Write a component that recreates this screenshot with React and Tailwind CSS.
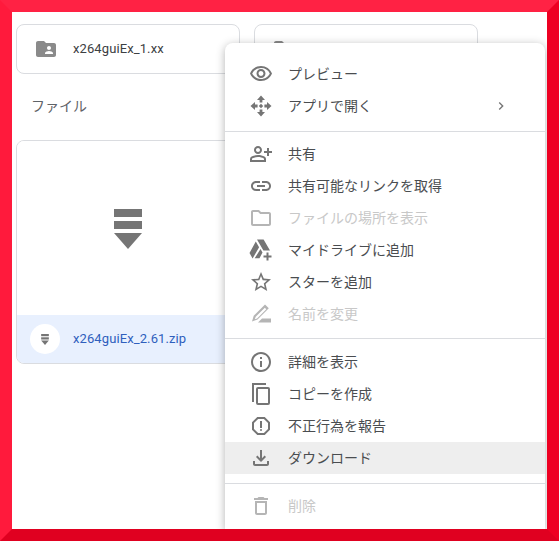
import React from 'react';
import {
    MdOutlineVisibility, MdOutlinePersonAddAlt, MdLink, MdOutlineFolder, MdStarBorder,
    MdOutlineInfo, MdOutlineReportGmailerrorred, MdOutlineFileDownload, MdOutlineDelete,
    MdFolderShared, MdChevronRight,
} from 'react-icons/md';

const OpenWithIcon = ({ className }) => (
    <svg viewBox="0 0 24 24" className={className} fill="currentColor">
        <path d="M12 1.500l4 4.500h-2.600v2.600h-2.800V6H8zM12 22.500l-4-4.500h2.600v-2.600h2.800V18H16zM1.500 12l4.500-4v2.600h2.600v2.800H6V16zM22.500 12l-4.500 4v-2.600h-2.600v-2.800H18V8z" />
        <path d="M12 9.800l2.200 2.200-2.200 2.200L9.800 12z" />
    </svg>
);

const DriveAddIcon = ({ className }) => (
    <svg viewBox="0 0 24 24" className={className} fill="currentColor">
        <path d="M8 1.500h6.600l6.400 11h-6.600zM6.800 3.500l3.300 5.700L3.600 20.500.5 15zM11.500 11l2 3.500-3 5.800H5.700z" />
        <path d="M17.500 14.500h2v3h3v2h-3v3h-2v-3h-3v-2h3z" />
    </svg>
);

const CopyIcon = ({ className }) => (
    <svg viewBox="0 0 24 24" className={className} fill="currentColor">
        <path d="M3 1h14v2H5v17H3z" />
        <path d="M9 5h10a2 2 0 012 2v14a2 2 0 01-2 2H9a2 2 0 01-2-2V7a2 2 0 012-2zm0 2v14h10V7z" fillRule="evenodd" />
    </svg>
);

const RenameIcon = ({ className }) => (
    <svg viewBox="0 0 24 24" className={className} fill="currentColor">
        <path d="M16 2.500l3.800 3.800L8.500 17.600 3 19.500l1.700-5.700zm-.2 3.200L6.700 14.800l-.9 2.500 2.300-.9 9.200-9.100z" fillRule="evenodd" />
        <path d="M13 16.500h9v4H9z" />
    </svg>
);

const ZipIcon = ({ className }) => (
    <svg viewBox="0 0 28 40" className={className} fill="currentColor">
        <rect x="0" y="0" width="28" height="8" />
        <rect x="0" y="12" width="28" height="8" />
        <path d="M0 24h28L14 40z" />
    </svg>
);

const sections = [
    [
        { label: 'プレビュー', icon: MdOutlineVisibility },
        { label: 'アプリで開く', icon: OpenWithIcon, arrow: true },
    ],
    [
        { label: '共有', icon: MdOutlinePersonAddAlt },
        { label: '共有可能なリンクを取得', icon: MdLink },
        { label: 'ファイルの場所を表示', icon: MdOutlineFolder, disabled: true },
        { label: 'マイドライブに追加', icon: DriveAddIcon },
        { label: 'スターを追加', icon: MdStarBorder },
        { label: '名前を変更', icon: RenameIcon, disabled: true },
    ],
    [
        { label: '詳細を表示', icon: MdOutlineInfo },
        { label: 'コピーを作成', icon: CopyIcon },
        { label: '不正行為を報告', icon: MdOutlineReportGmailerrorred },
        { label: 'ダウンロード', icon: MdOutlineFileDownload, active: true },
    ],
    [
        { label: '削除', icon: MdOutlineDelete, disabled: true },
    ],
];

const MenuRow = ({ item }) => {
    const Icon = item.icon;
    return (
        <div className={`flex h-8 items-center pl-6 pr-9 ${item.active ? 'bg-[#eeeeee]' : ''}`}>
            <Icon className={`h-6 w-6 shrink-0 ${item.disabled ? 'text-[#b5b5b5]' : 'text-[#757575]'}`} />
            <span className={`ml-[15px] flex-1 text-sm ${item.disabled ? 'text-[#c8c8c8]' : 'text-[#4a4d50]'}`}>{item.label}</span>
            {item.arrow && <MdChevronRight className="h-4 w-4 text-[#757575]" />}
        </div>
    );
};

const FolderCard = ({ name }) => (
    <div className="flex h-[50px] w-[224px] items-center rounded-lg border border-[#dadce0] bg-white pl-[17px]">
        <MdFolderShared className="h-6 w-6 text-[#8a8a8a]" />
        <span className="ml-[15px] text-[13px] tracking-[0.1px] text-[#3c4043]">{name}</span>
    </div>
);

export default function App() {
    return (
        <div className="relative box-border h-[541px] w-[559px] overflow-hidden border-[12px] border-t-[#ff2244] border-r-[#ee0022] border-b-[#e00020] border-l-[#ff1a3c] bg-white pl-1 pt-3 font-['Roboto','Noto_Sans_CJK_JP',sans-serif]">
            <div className="flex gap-[14px]">
                <FolderCard name="x264guiEx_1.xx" />
                <FolderCard name="x264guiEx_1.xx" />
            </div>

            <div className="mt-[22px] pl-[15px] text-sm leading-5 text-[#5f6368]">ファイル</div>

            <div className="mt-[24px] w-[224px] overflow-hidden rounded-lg border border-[#dadce0]">
                <div className="flex h-[174px] items-center justify-center bg-white pt-[2px]">
                    <ZipIcon className="h-10 w-7 text-[#757575]" />
                </div>
                <div className="flex h-[48px] items-center bg-[#e8f0fe] pl-[13px]">
                    <div className="flex h-[30px] w-[30px] items-center justify-center rounded-full bg-white">
                        <ZipIcon className="h-[11px] w-2 text-[#757575]" />
                    </div>
                    <span className="ml-[13px] text-[13px] tracking-[0.1px] text-[#2f5fbd]">x264guiEx_2.61.zip</span>
                </div>
            </div>

            <div className="absolute left-[213px] top-[31px] w-[320px] rounded-t-lg bg-white shadow-[0_2px_10px_rgba(0,0,0,0.3)]">
                <div className="border-b border-[#dadce0] pb-[9px] pt-[15px]">
                    {sections[0].map((item) => <MenuRow key={item.label} item={item} />)}
                </div>
                <div className="border-b border-[#dadce0] pb-2 pt-[6px]">
                    {sections[1].map((item) => <MenuRow key={item.label} item={item} />)}
                </div>
                <div className="border-b border-[#dadce0] pb-[9px] pt-[7px]">
                    {sections[2].map((item) => <MenuRow key={item.label} item={item} />)}
                </div>
                <div className="pb-2 pt-[6px]">
                    {sections[3].map((item) => <MenuRow key={item.label} item={item} />)}
                </div>
            </div>
        </div>
    );
}
